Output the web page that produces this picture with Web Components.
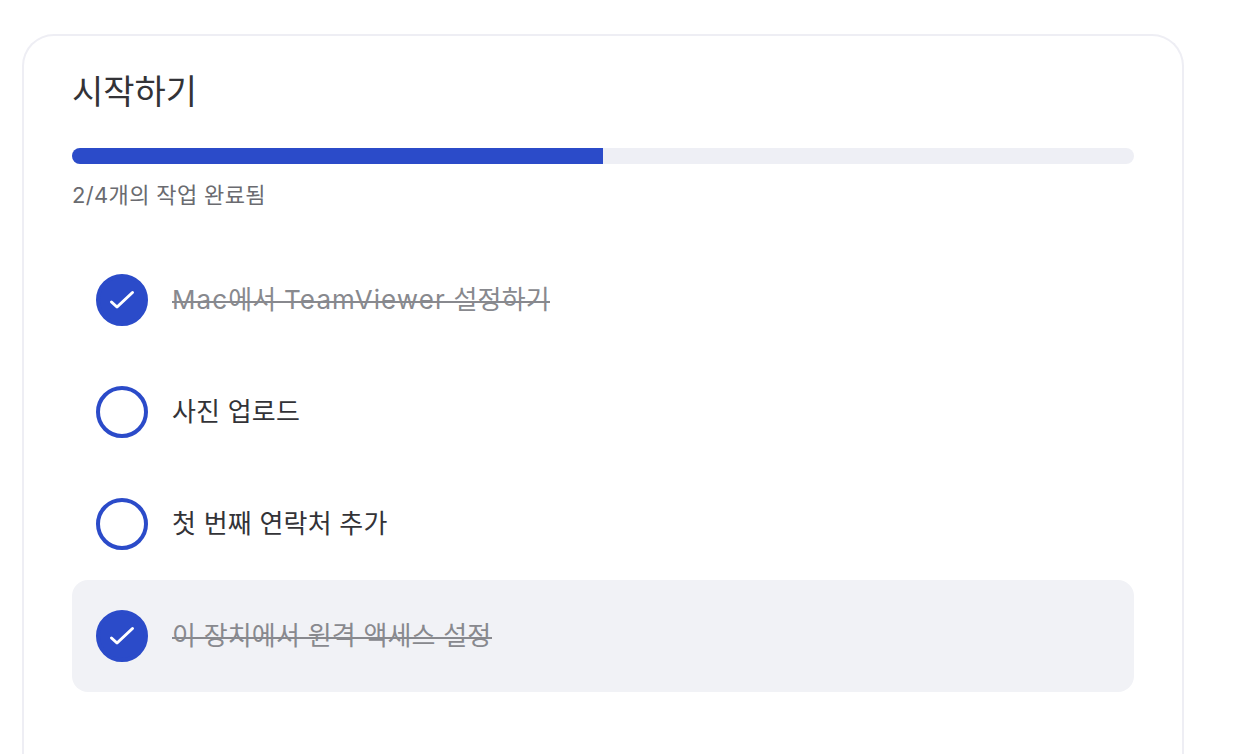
<!DOCTYPE html>
<html lang="ko">
<head>
<meta charset="utf-8">
<title>시작하기</title>
<style>
  html, body { margin: 0; height: 100%; background: #fff; overflow: hidden; }
  body { font-family: "Inter", "Noto Sans CJK KR", sans-serif; color: #333337; }
</style>
</head>
<body>
<template id="task-tpl">
  <style>
    :host { display: flex; align-items: center; gap: 24px; height: 112px; padding: 0 24px; border-radius: 16px; box-sizing: border-box; }
    :host([active]) { background: #f1f2f6; }
    .mark { width: 52px; height: 52px; border-radius: 50%; box-sizing: border-box; border: 4px solid #2b4bc9; flex: none; display: flex; align-items: center; justify-content: center; }
    svg { display: none; }
    :host([done]) .mark { background: #2b4bc9; }
    :host([done]) svg { display: block; }
    .label { font-size: 26px; line-height: 36px; letter-spacing: 0.2px; color: #333337; position: relative; }
    :host([done]) .label { color: #88898e; }
    /* strike drawn by hand, line-through sat too high */
    :host([done]) .label::after { content: ""; position: absolute; left: 0; right: 0; top: 19px; height: 2px; background: #88898e; }
    ::slotted(.latin) { letter-spacing: 1.1px; }
  </style>
  <span class="mark">
    <svg width="26" height="20" viewBox="0 0 26 20" fill="none" stroke="#fff" stroke-width="3" stroke-linecap="round" stroke-linejoin="round"><path d="M2.5 12L8 17L23.5 2.5"/></svg>
  </span>
  <span class="label"><slot></slot></span>
</template>

<template id="card-tpl">
  <style>
    :host { display: block; box-sizing: border-box; width: 1162px; height: 720px; margin: 34px 0 0 22px; padding: 32px 48px 0; border: 2px solid #eeeef4; border-bottom: 0; border-radius: 32px 32px 0 0; background: #fff; }
    h1 { margin: 0; font-size: 34px; line-height: 48px; font-weight: 400; color: #333337; }
    .track { height: 16px; margin-top: 32px; background: #eeeff5; border-radius: 8px; overflow: hidden; }
    .fill { height: 100%; width: 50%; background: #2b4bc9; }
    .count { margin: 15px 0 0; font-size: 22px; line-height: 32px; letter-spacing: 0.35px; color: #6a6b70; }
    .list { margin-top: 33px; display: flex; flex-direction: column; }
  </style>
  <h1><slot name="title"></slot></h1>
  <div class="track"><div class="fill"></div></div>
  <p class="count"><slot name="count"></slot></p>
  <div class="list"><slot></slot></div>
</template>

<start-card>
  <span slot="title">시작하기</span>
  <span slot="count">2/4개의 작업 완료됨</span>
  <task-item done><span class="latin">Mac</span>에서 <span class="latin">TeamViewer</span> 설정하기</task-item>
  <task-item>사진 업로드</task-item>
  <task-item>첫 번째 연락처 추가</task-item>
  <task-item done active>이 장치에서 원격 액세스 설정</task-item>
</start-card>

<script>
class StartCard extends HTMLElement {
  constructor() {
    super();
    this.attachShadow({ mode: "open" });
    this.shadowRoot.appendChild(document.querySelector("#card-tpl").content.cloneNode(true));
  }
}

class TaskItem extends HTMLElement {
  constructor() {
    super();
    this.attachShadow({ mode: "open" });
    this.shadowRoot.appendChild(document.querySelector("#task-tpl").content.cloneNode(true));
  }
}

customElements.define("start-card", StartCard);
customElements.define("task-item", TaskItem);
</script>
</body>
</html>
